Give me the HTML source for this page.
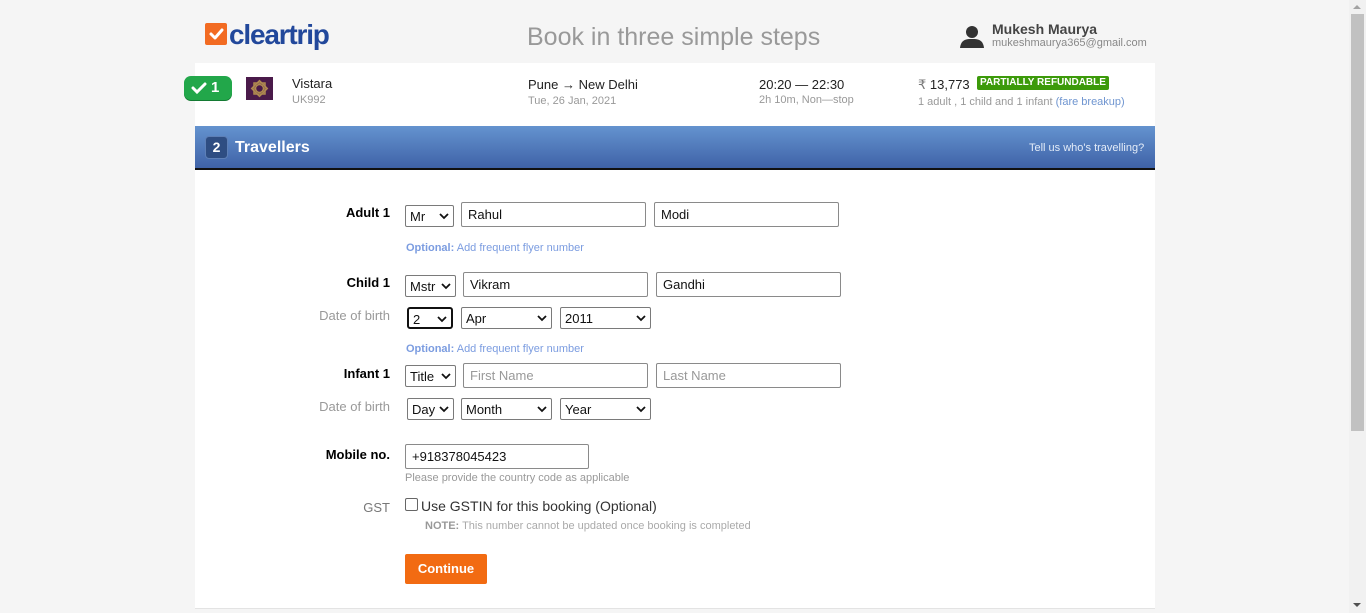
<!DOCTYPE html>
<html><head><meta charset="utf-8">
<style>
*{box-sizing:border-box;margin:0;padding:0}
body{width:1366px;height:613px;overflow:hidden;background:#f5f5f5;font-family:"Liberation Sans",Arial,sans-serif;position:relative;color:#000}
.a{position:absolute;white-space:nowrap}
.card{position:absolute;left:195px;top:63px;width:960px;height:546px;background:#fff;border-bottom:1px solid #e3e3e3}
.box{position:absolute;height:25px;border:1px solid #8a8a8a;border-radius:2px;background:#fff;font-size:13px;line-height:23px;padding-left:6px;color:#111}
.box.ph{color:#999}
.sel{position:absolute;height:22px;border:1px solid #7a7a7a;border-radius:2px;background:#fff;font-size:13px;line-height:21px;padding-left:4px;color:#111}
.sel svg{position:absolute;right:4px;top:7px}
.lbl{position:absolute;font-size:13px;font-weight:bold;text-align:right;width:120px;left:270px}
.dob{position:absolute;font-size:13px;color:#999;text-align:right;width:120px;left:270px}
.opt{position:absolute;left:406px;font-size:11px;color:#7b9ce0}
.opt b{color:#7b9ce0}
</style></head><body>
<div class="a" style="left:1349px;top:0;width:17px;height:613px;background:#f1f1f1"></div>
<div class="a" style="left:1351px;top:14px;width:13px;height:417px;background:#c1c1c1"></div>
<div class="a" style="left:1353px;top:5px;width:0;height:0;border-left:4px solid transparent;border-right:4px solid transparent;border-bottom:4px solid #a3a3a3"></div>
<div class="a" style="left:1353px;top:603px;width:0;height:0;border-left:4px solid transparent;border-right:4px solid transparent;border-top:4px solid #505050"></div>

<div class="a" style="left:205px;top:23px;width:22px;height:22px;background:#f26b22;border-radius:2px"></div>
<svg class="a" style="left:205px;top:23px" width="22" height="22"><path d="M6 11 L10 15 L17 7" stroke="#fff" stroke-width="3" fill="none" stroke-linecap="round" stroke-linejoin="round"/></svg>
<div class="a" style="left:229px;top:19px;font-size:28px;font-weight:bold;color:#22489b;letter-spacing:-1.2px">cleartrip</div>
<div class="a" style="left:527px;top:23px;font-size:25px;color:#999">Book in three simple steps</div>
<svg class="a" style="left:959px;top:24px" width="26" height="24"><circle cx="13" cy="8" r="6" fill="#333"/><path d="M1 24 C2 15 8 15 13 15 C18 15 24 15 25 24Z" fill="#333"/></svg>
<div class="a" style="left:992px;top:21px;font-size:14px;font-weight:bold;color:#444">Mukesh Maurya</div>
<div class="a" style="left:992px;top:37px;font-size:11px;color:#888">mukeshmaurya365@gmail.com</div>

<div class="card"></div>
<div class="a" style="left:184px;top:76px;width:48px;height:24px;background:#22a74a;border-radius:7px;box-shadow:0 1px 0 #147a33"></div>
<svg class="a" style="left:191px;top:81px" width="16" height="14"><path d="M2 7 L6 11 L14 3" stroke="#fff" stroke-width="3" fill="none" stroke-linecap="round"/></svg>
<div class="a" style="left:211px;top:79px;font-size:15px;font-weight:bold;color:#fff">1</div>
<div class="a" style="left:246px;top:77px;width:27px;height:23px;background:#4a1a4a"></div>
<svg class="a" style="left:246px;top:77px" width="27" height="23"><g fill="none" stroke="#b08a50" stroke-width="1.5"><circle cx="13.5" cy="11.5" r="4"/><rect x="8" y="6" width="11" height="11"/><rect x="8" y="6" width="11" height="11" transform="rotate(45 13.5 11.5)"/></g></svg>
<div class="a" style="left:292px;top:76px;font-size:13px;color:#222">Vistara</div>
<div class="a" style="left:292px;top:94px;font-size:11px;color:#999">UK992</div>
<div class="a" style="left:528px;top:77px;font-size:13px;color:#222">Pune → New Delhi</div>
<div class="a" style="left:528px;top:95px;font-size:11px;color:#999">Tue, 26 Jan, 2021</div>
<div class="a" style="left:759px;top:77px;font-size:13px;color:#222">20:20 — 22:30</div>
<div class="a" style="left:759px;top:94px;font-size:11px;color:#999">2h 10m, Non—stop</div>
<div class="a" style="left:918px;top:77px;font-size:13px;color:#222"><span style="color:#777">₹</span> 13,773</div>
<div class="a" style="left:977px;top:76px;height:14px;padding:0 3px;background:#3c9a0a;border-radius:2px;font-size:10px;font-weight:bold;color:#fff;line-height:14px">PARTIALLY REFUNDABLE</div>
<div class="a" style="left:918px;top:96px;font-size:11px;color:#999">1 adult , 1 child and 1 infant <span style="color:#6f95d0">(fare breakup)</span></div>

<div class="a" style="left:195px;top:126px;width:960px;height:44px;background:linear-gradient(#6493cf,#3f62a7);border-bottom:2px solid #111"></div>
<div class="a" style="left:205px;top:136px;width:23px;height:23px;background:#2e4d82;border:1px solid #5d7fb6;border-radius:4px;color:#fff;font-weight:bold;font-size:14px;text-align:center;line-height:21px">2</div>
<div class="a" style="left:235px;top:139px;font-size:16px;font-weight:bold;color:#fff">Travellers</div>
<div class="a" style="left:1029px;top:142px;font-size:11px;color:#e3ecf8">Tell us who's travelling?</div>

<div class="lbl" style="top:205px">Adult 1</div>
<div class="sel" style="left:405px;top:205px;width:49px">Mr<svg width="10" height="7"><path d="M1 1 L5 5 L9 1" stroke="#111" stroke-width="1.8" fill="none"/></svg></div>
<div class="box" style="left:461px;top:202px;width:185px">Rahul</div>
<div class="box" style="left:654px;top:202px;width:185px">Modi</div>
<div class="opt" style="top:242px"><b>Optional:</b> Add frequent flyer number</div>

<div class="lbl" style="top:275px">Child 1</div>
<div class="sel" style="left:405px;top:275px;width:51px">Mstr<svg width="10" height="7"><path d="M1 1 L5 5 L9 1" stroke="#111" stroke-width="1.8" fill="none"/></svg></div>
<div class="box" style="left:463px;top:272px;width:185px">Vikram</div>
<div class="box" style="left:656px;top:272px;width:185px">Gandhi</div>
<div class="dob" style="top:308px">Date of birth</div>
<div class="sel" style="left:407px;top:307px;width:46px;border:2px solid #111;border-radius:3px">2<svg width="10" height="7"><path d="M1 1 L5 5 L9 1" stroke="#111" stroke-width="1.8" fill="none"/></svg></div>
<div class="sel" style="left:461px;top:307px;width:91px">Apr<svg width="10" height="7"><path d="M1 1 L5 5 L9 1" stroke="#111" stroke-width="1.8" fill="none"/></svg></div>
<div class="sel" style="left:560px;top:307px;width:91px">2011<svg width="10" height="7"><path d="M1 1 L5 5 L9 1" stroke="#111" stroke-width="1.8" fill="none"/></svg></div>
<div class="opt" style="top:343px"><b>Optional:</b> Add frequent flyer number</div>

<div class="lbl" style="top:366px">Infant 1</div>
<div class="sel" style="left:405px;top:365px;width:51px">Title<svg width="10" height="7"><path d="M1 1 L5 5 L9 1" stroke="#111" stroke-width="1.8" fill="none"/></svg></div>
<div class="box ph" style="left:463px;top:363px;width:185px">First Name</div>
<div class="box ph" style="left:656px;top:363px;width:185px">Last Name</div>
<div class="dob" style="top:399px">Date of birth</div>
<div class="sel" style="left:407px;top:398px;width:47px">Day<svg width="10" height="7"><path d="M1 1 L5 5 L9 1" stroke="#111" stroke-width="1.8" fill="none"/></svg></div>
<div class="sel" style="left:461px;top:398px;width:91px">Month<svg width="10" height="7"><path d="M1 1 L5 5 L9 1" stroke="#111" stroke-width="1.8" fill="none"/></svg></div>
<div class="sel" style="left:560px;top:398px;width:91px">Year<svg width="10" height="7"><path d="M1 1 L5 5 L9 1" stroke="#111" stroke-width="1.8" fill="none"/></svg></div>

<div class="lbl" style="top:447px">Mobile no.</div>
<div class="box" style="left:405px;top:444px;width:184px;color:#111">+918378045423</div>
<div class="a" style="left:405px;top:472px;font-size:11px;color:#999">Please provide the country code as applicable</div>
<div class="dob" style="top:500px;color:#777">GST</div>
<div class="a" style="left:405px;top:498px;width:13px;height:13px;border:1px solid #666;border-radius:2px;background:#fff"></div>
<div class="a" style="left:421px;top:498px;font-size:14px;color:#333">Use GSTIN for this booking (Optional)</div>
<div class="a" style="left:425px;top:520px;font-size:11px;color:#aaa"><b style="color:#999">NOTE:</b> This number cannot be updated once booking is completed</div>
<div class="a" style="left:405px;top:554px;width:82px;height:30px;background:#f26b12;border-radius:2px;color:#fff;font-weight:bold;font-size:13px;text-align:center;line-height:30px">Continue</div>
</body></html>
